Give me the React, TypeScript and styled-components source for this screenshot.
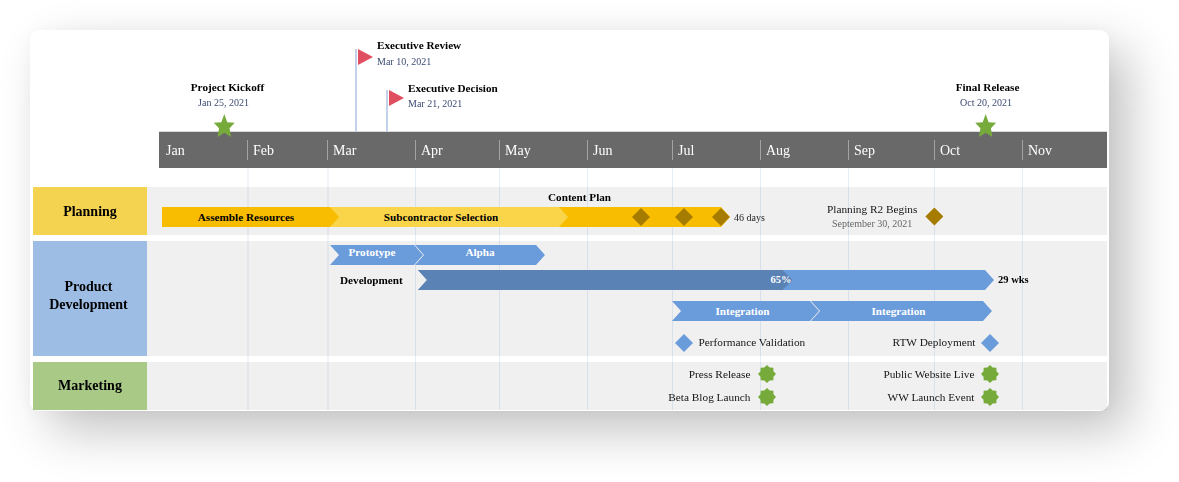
import styled, { createGlobalStyle } from 'styled-components';

const MONTHS = [
  { name: 'Jan', width: 88 },
  { name: 'Feb', width: 80 },
  { name: 'Mar', width: 88 },
  { name: 'Apr', width: 84 },
  { name: 'May', width: 88 },
  { name: 'Jun', width: 85 },
  { name: 'Jul', width: 88 },
  { name: 'Aug', width: 88 },
  { name: 'Sep', width: 86 },
  { name: 'Oct', width: 88 },
  { name: 'Nov', width: 85 },
];

const BLUE = '#6a9bda';
const AMBER = '#f8bd00';
const OCHRE = '#a67c00';
const GREEN = '#76ab3c';
const DEV_WIDTH = 576;
const DEV_PROGRESS = 0.65;

function burstPoints() {
  const points: string[] = [];
  for (let i = 0; i < 16; i++) {
    const r = i % 2 === 0 ? 9 : 7;
    const a = (Math.PI * i) / 8 - Math.PI / 2;
    points.push(`${(9 + r * Math.cos(a)).toFixed(2)},${(9 + r * Math.sin(a)).toFixed(2)}`);
  }
  return points.join(' ');
}

function Star() {
  return (
    <StarIcon viewBox='0 0 100 100' preserveAspectRatio='none'>
      <polygon
        points='50,0 64,36 100,38 75,62 82,100 50,81 18,100 25,62 0,38 36,36'
        fill={GREEN}
      />
    </StarIcon>
  );
}

function Burst() {
  return (
    <BurstIcon viewBox='0 0 18 18'>
      <polygon points={burstPoints()} fill={GREEN} />
    </BurstIcon>
  );
}

function Flag() {
  return (
    <FlagIcon viewBox='0 0 15 16'>
      <polygon points='0,0 15,8 0,16' fill='#e04f5f' />
    </FlagIcon>
  );
}

export default function App() {
  return (
    <Page>
      <GlobalStyle />
      <Card>
        <Chart>
          <Milestones>
            <StarMilestone $center={191}>
              <MilestoneTitle $nudge={7}>Project Kickoff</MilestoneTitle>
              <MilestoneDate $nudge={-1}>Jan 25, 2021</MilestoneDate>
              <Star />
            </StarMilestone>

            <FlagMilestone $x={322} $top={19} $height={83}>
              <Flag />
              <FlagText $lift={11} $gap={3}>
                <MilestoneTitle>Executive Review</MilestoneTitle>
                <MilestoneDate>Mar 10, 2021</MilestoneDate>
              </FlagText>
            </FlagMilestone>

            <FlagMilestone $x={353} $top={60} $height={42}>
              <Flag />
              <FlagText $lift={9} $gap={2}>
                <MilestoneTitle>Executive Decision</MilestoneTitle>
                <MilestoneDate>Mar 21, 2021</MilestoneDate>
              </FlagText>
            </FlagMilestone>

            <StarMilestone $center={952.5}>
              <MilestoneTitle $nudge={4}>Final Release</MilestoneTitle>
              <MilestoneDate $nudge={1}>Oct 20, 2021</MilestoneDate>
              <Star />
            </StarMilestone>
          </Milestones>

          <Axis>
            {MONTHS.map((month, i) => (
              <Month key={month.name} $width={month.width}>
                <MonthName $first={i === 0}>{month.name}</MonthName>
              </Month>
            ))}
          </Axis>

          <Body>
            <GridLines>
              {MONTHS.map((month, i) => (
                <GridCell key={month.name} $width={month.width} $first={i === 0} $wide={i < 3} />
              ))}
            </GridLines>

            <Lanes>
              <Lane>
                <LaneLabel $color='#f4d350' $height={48} $pad='2px 0 0'>Planning</LaneLabel>
                <Track>
                  <Row $x={401} $top={3}>
                    <BoldLabel>Content Plan</BoldLabel>
                  </Row>
                  <Row $x={15} $top={3}>
                    <Bar $width={177} $color={AMBER} $plain $layer={3} $shift={9}>
                      <DarkBarText>Assemble Resources</DarkBarText>
                    </Bar>
                    <Bar $width={238} $color='#fad54a' $plain $layer={2} $overlap={9} $shift={16}>
                      <DarkBarText>Subcontractor Selection</DarkBarText>
                    </Bar>
                    <Bar $width={171} $color={AMBER} $plain $layer={1} $overlap={9}>
                      <BarDiamond $x={73} />
                      <BarDiamond $x={116} />
                      <BarDiamond $x={153} />
                    </Bar>
                    <NoteLabel>46 days</NoteLabel>
                  </Row>
                  <LaneNote>
                    <NoteStack>
                      <TaskLabel>Planning R2 Begins</TaskLabel>
                      <SubLabel>September 30, 2021</SubLabel>
                    </NoteStack>
                    <Diamond $color={OCHRE} />
                  </LaneNote>
                </Track>
              </Lane>

              <Lane>
                <LaneLabel $color='#9dbde4' $height={115} $pad='0 3px 6px 0'>
                  Product
                  <br />
                  Development
                </LaneLabel>
                <Track>
                  <Row $x={183} $top={4}>
                    <Bar $width={93} $color={BLUE} $shift={9}>
                      <RaisedBarText>Prototype</RaisedBarText>
                    </Bar>
                    <Bar $width={130} $color={BLUE} $overlap={8}>
                      <RaisedBarText>Alpha</RaisedBarText>
                    </Bar>
                  </Row>
                  <Row $x={193} $top={5}>
                    <RowHeading>Development</RowHeading>
                    <Bar $width={DEV_WIDTH} $color={BLUE}>
                      <Progress style={{ width: DEV_WIDTH * DEV_PROGRESS }}>
                        <ProgressText>65%</ProgressText>
                      </Progress>
                    </Bar>
                    <WeeksLabel>29 wks</WeeksLabel>
                  </Row>
                  <Row $x={525} $top={11}>
                    <Bar $width={147} $color={BLUE} $shift={6}>
                      <BarText>Integration</BarText>
                    </Bar>
                    <Bar $width={181} $color={BLUE} $overlap={8} $shift={6}>
                      <BarText>Integration</BarText>
                    </Bar>
                  </Row>
                  <SpreadRow $x={528} $top={13} $width={324}>
                    <Marker>
                      <Diamond $color={BLUE} />
                      <RaisedLabel>Performance Validation</RaisedLabel>
                    </Marker>
                    <Marker>
                      <RaisedLabel>RTW Deployment</RaisedLabel>
                      <Diamond $color={BLUE} />
                    </Marker>
                  </SpreadRow>
                </Track>
              </Lane>

              <Lane>
                <LaneLabel $color='#a9c986' $height={48} $pad='0'>Marketing</LaneLabel>
                <MarkerGrid>
                  <Marker $gap={7.5}>
                    <TaskLabel>Press Release</TaskLabel>
                    <Burst />
                  </Marker>
                  <Marker $gap={6.5}>
                    <TaskLabel>Public Website Live</TaskLabel>
                    <Burst />
                  </Marker>
                  <Marker $gap={7.5}>
                    <TaskLabel>Beta Blog Launch</TaskLabel>
                    <Burst />
                  </Marker>
                  <Marker $gap={6.5}>
                    <TaskLabel>WW Launch Event</TaskLabel>
                    <Burst />
                  </Marker>
                </MarkerGrid>
              </Lane>
            </Lanes>
          </Body>
        </Chart>
      </Card>
    </Page>
  );
}

const GlobalStyle = createGlobalStyle`
  html, body {
    margin: 0;
    background: #fff;
    font-family: "Liberation Serif", "Times New Roman", serif;
  }
`;

const Page = styled.div`
  width: 1179px;
  height: 482px;
  padding: 30px 0 0 30px;
  box-sizing: border-box;
  overflow: hidden;
`;

const Card = styled.div`
  width: 1079px;
  height: 381px;
  box-sizing: border-box;
  padding: 0 2px 0 3px;
  background: #fff;
  border-radius: 9px;
  box-shadow: 20px 20px 50px rgba(0, 0, 0, 0.24), 0 0 18px rgba(0, 0, 0, 0.03);
`;

// the source is a scaled-up picture, so everything inside it is a touch soft
const Chart = styled.div`
  filter: blur(0.45px);
`;

const Milestones = styled.div`
  position: relative;
  z-index: 2;
  height: 102px;
`;

const StarMilestone = styled.div<{ $center: number }>`
  position: absolute;
  left: ${(p) => p.$center}px;
  top: 50px;
  display: flex;
  flex-direction: column;
  align-items: center;
  gap: 2px;
  transform: translateX(-50%);
`;

const FlagMilestone = styled.div<{ $x: number; $top: number; $height: number }>`
  position: absolute;
  left: ${(p) => p.$x}px;
  top: ${(p) => p.$top}px;
  display: flex;
  align-items: flex-start;
  gap: 4px;
  box-sizing: border-box;
  height: ${(p) => p.$height}px;
  padding-left: 1px;
  border-left: 2px solid #c3d2ea;
`;

const FlagText = styled.div<{ $lift: number; $gap: number }>`
  display: flex;
  flex-direction: column;
  gap: ${(p) => p.$gap}px;
  margin-top: -${(p) => p.$lift}px;
`;

const MilestoneTitle = styled.div<{ $nudge?: number }>`
  margin-left: ${(p) => p.$nudge ?? 0}px;
  font-size: 11.2px;
  font-weight: 700;
  line-height: 14px;
  white-space: nowrap;
  color: #000;
`;

const MilestoneDate = styled.div<{ $nudge?: number }>`
  margin-left: ${(p) => p.$nudge ?? 0}px;
  font-size: 10px;
  line-height: 14px;
  white-space: nowrap;
  color: #3c4b72;
`;

const StarIcon = styled.svg`
  flex: none;
  width: 21px;
  height: 23px;
  margin-top: 2px;
`;

const FlagIcon = styled.svg`
  flex: none;
  width: 15px;
  height: 16px;
`;

const Axis = styled.div`
  display: flex;
  height: 36px;
  margin-left: 126px;
  background: #696969;
  box-shadow: 0 -1px 0 #d8d8d8;
`;

const Month = styled.div<{ $width: number }>`
  display: flex;
  align-items: center;
  width: ${(p) => p.$width}px;
`;

const MonthName = styled.div<{ $first: boolean }>`
  height: 20px;
  padding-left: ${(p) => (p.$first ? 7 : 5)}px;
  border-left: ${(p) => (p.$first ? 'none' : '1px solid #a3a3a3')};
  font-size: 14px;
  line-height: 22px;
  color: #fff;
`;

const Body = styled.div`
  position: relative;
  padding-top: 19px;
`;

const GridLines = styled.div`
  position: absolute;
  inset: 0 0 0 126px;
  display: flex;
`;

const GridCell = styled.div<{ $width: number; $first: boolean; $wide: boolean }>`
  box-sizing: border-box;
  width: ${(p) => p.$width}px;
  border-left: ${(p) => (p.$first ? 'none' : p.$wide ? '2px solid #f1f4f9' : '1px solid #e6eefb')};
`;

const Lanes = styled.div`
  position: relative;
  display: flex;
  flex-direction: column;
  gap: 6px;
`;

const Lane = styled.div`
  display: flex;
`;

const LaneLabel = styled.div<{ $color: string; $height: number; $pad: string }>`
  display: flex;
  align-items: center;
  justify-content: center;
  flex: none;
  width: 114px;
  height: ${(p) => p.$height}px;
  padding: ${(p) => p.$pad};
  box-sizing: border-box;
  background: ${(p) => p.$color};
  font-size: 14px;
  font-weight: 700;
  line-height: 17.5px;
  text-align: center;
  color: #000;
`;

const Track = styled.div`
  position: relative;
  flex: 1;
  display: flex;
  flex-direction: column;
  background: rgba(0, 0, 0, 0.06);
`;

const Row = styled.div<{ $x: number; $top: number }>`
  display: flex;
  align-items: center;
  margin: ${(p) => p.$top}px 0 0 ${(p) => p.$x}px;
`;

const SpreadRow = styled(Row)<{ $width: number }>`
  justify-content: space-between;
  width: ${(p) => p.$width}px;
`;

const Marker = styled.div<{ $gap?: number }>`
  display: flex;
  align-items: center;
  gap: ${(p) => p.$gap ?? 5.5}px;
`;

const MarkerGrid = styled.div`
  flex: 1;
  display: grid;
  grid-template-columns: 629px 223px;
  grid-auto-rows: 18px;
  row-gap: 5px;
  justify-items: end;
  padding-top: 3px;
  background: rgba(0, 0, 0, 0.06);
`;

const Bar = styled.div<{
  $width: number;
  $color: string;
  $plain?: boolean;
  $layer?: number;
  $overlap?: number;
  $shift?: number;
}>`
  position: relative;
  z-index: ${(p) => p.$layer ?? 0};
  display: flex;
  align-items: center;
  justify-content: center;
  flex: none;
  box-sizing: border-box;
  width: ${(p) => p.$width}px;
  height: 20px;
  margin-left: -${(p) => p.$overlap ?? 0}px;
  padding-right: ${(p) => p.$shift ?? 0}px;
  background: ${(p) => p.$color};
  clip-path: polygon(
    0 0,
    calc(100% - 9px) 0,
    100% 50%,
    calc(100% - 9px) 100%,
    0 100%,
    ${(p) => (p.$plain ? '0' : '9px')} 50%
  );
`;

const BarText = styled.span`
  font-size: 11.2px;
  font-weight: 700;
  white-space: nowrap;
  color: #fff;
`;

const DarkBarText = styled(BarText)`
  color: #000;
`;

const RaisedBarText = styled(BarText)`
  margin-top: -6px;
`;

const Progress = styled.div`
  position: absolute;
  left: 0;
  top: 0;
  display: flex;
  align-items: center;
  justify-content: flex-end;
  box-sizing: border-box;
  height: 20px;
  padding-right: 1px;
  background: #5a82b5;
  clip-path: polygon(0 0, calc(100% - 10px) 0, 100% 50%, calc(100% - 10px) 100%, 0 100%);
`;

const ProgressText = styled(BarText)`
  margin-top: -2px;
  font-size: 10.5px;
`;

const Diamond = styled.div<{ $color: string }>`
  flex: none;
  width: 18px;
  height: 18px;
  background: ${(p) => p.$color};
  clip-path: polygon(50% 0, 100% 50%, 50% 100%, 0 50%);
`;

const BarDiamond = styled.div<{ $x: number }>`
  position: absolute;
  left: ${(p) => p.$x}px;
  top: 1px;
  width: 18px;
  height: 18px;
  background: ${OCHRE};
  clip-path: polygon(50% 0, 100% 50%, 50% 100%, 0 50%);
`;

const BurstIcon = styled.svg`
  flex: none;
  width: 18px;
  height: 18px;
`;

const LaneNote = styled.div`
  position: absolute;
  left: 680px;
  top: 15px;
  display: flex;
  align-items: center;
  gap: 8px;
`;

const NoteStack = styled.div`
  display: flex;
  flex-direction: column;
  align-items: center;
  gap: 1px;
`;

const BoldLabel = styled.div`
  font-size: 11.2px;
  font-weight: 700;
  line-height: 14px;
  white-space: nowrap;
  color: #000;
`;

const RowHeading = styled(BoldLabel)`
  flex: none;
  width: 78px;
`;

const WeeksLabel = styled(BoldLabel)`
  margin-left: 4px;
  font-size: 10.5px;
`;

const TaskLabel = styled.div`
  font-size: 11.3px;
  line-height: 14px;
  white-space: nowrap;
  color: #141414;
`;

const RaisedLabel = styled(TaskLabel)`
  padding-bottom: 2px;
`;

const NoteLabel = styled.div`
  margin: 1px 0 0 4px;
  font-size: 10px;
  line-height: 14px;
  white-space: nowrap;
  color: #222;
`;

const SubLabel = styled.div`
  font-size: 10px;
  line-height: 14px;
  white-space: nowrap;
  color: #666;
`;
